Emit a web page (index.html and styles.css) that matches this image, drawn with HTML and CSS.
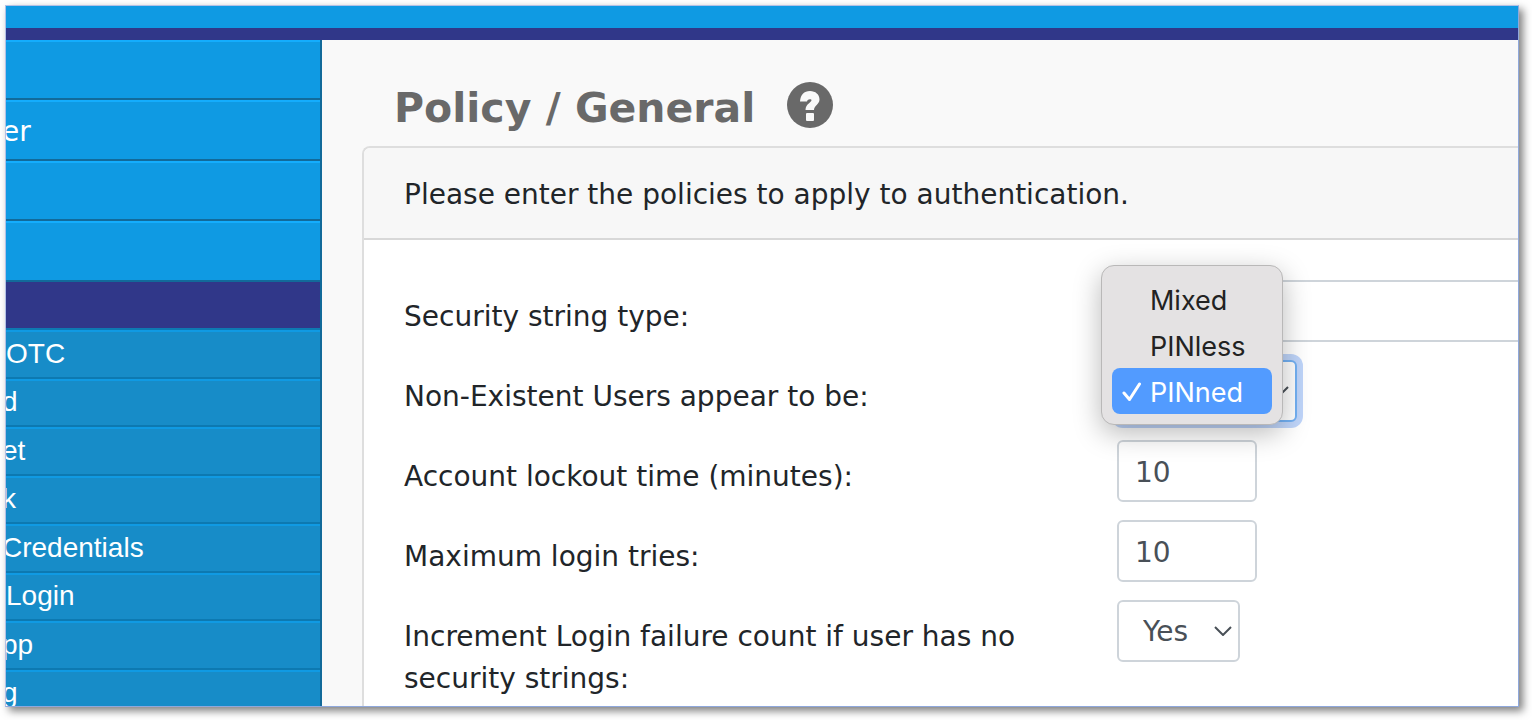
FILE: index.html
```html
<!DOCTYPE html>
<html lang="en">
<head>
<meta charset="UTF-8">
<title>Policy / General</title>
<link rel="stylesheet" href="styles.css">
</head>
<body>
<div class="frame">
  <header class="topbar"></header>
  <div class="layout">
    <nav class="sidebar">
      <ul class="menu">
        <li><a href="#"></a></li>
        <li><a href="#" class="cut">er</a></li>
        <li><a href="#"></a></li>
        <li><a href="#"></a></li>
      </ul>
      <a href="#" class="current"></a>
      <ul class="submenu">
        <li><a href="#">OTC</a></li>
        <li><a href="#" class="cut">d</a></li>
        <li><a href="#" class="cut">et</a></li>
        <li><a href="#" class="cut">k</a></li>
        <li><a href="#" class="cut">Credentials</a></li>
        <li><a href="#">Login</a></li>
        <li><a href="#" class="cut">pp</a></li>
        <li><a href="#" class="cut">g</a></li>
      </ul>
    </nav>
    <main class="content">
      <div class="title">
        <h1>Policy / General</h1>
        <button type="button" class="help" aria-label="Help">
          <svg viewBox="0 0 46 46" width="46" height="46">
            <circle cx="23" cy="23" r="23" fill="#696969"/>
            <path d="M13 19.500C13.500 13 17 9 23 9C28.500 9 32.500 12.500 32.500 17.500C32.500 22.500 27 23.500 27 28H18.500C18.500 22 24.500 20.500 24.500 18C24.500 16.800 20.500 16.500 20 19.500Z" fill="#f9f9f9"/>
            <rect x="19" y="31" width="8" height="8" rx="1" fill="#f9f9f9"/>
          </svg>
        </button>
      </div>
      <section class="card">
        <p class="card-header">Please enter the policies to apply to authentication.</p>
        <form class="card-body">
          <div class="row">
            <label for="type">Security string type:</label>
            <div class="field"><select id="type" class="wide"><option></option></select></div>
          </div>
          <div class="row">
            <label for="users">Non-Existent Users appear to be:</label>
            <div class="field">
              <select id="users" class="focused"><option>PINned</option></select>
              <div class="popup" role="listbox" aria-label="Non-Existent Users appear to be">
                <button type="button" role="option">Mixed</button>
                <button type="button" role="option">PINless</button>
                <button type="button" role="option" class="selected" aria-selected="true">
                  <svg viewBox="0 0 20 22" width="20" height="22"><path d="M2 12L7.500 18.500L17.500 3" fill="none" stroke="#fff" stroke-width="3" stroke-linecap="round" stroke-linejoin="round"/></svg>
                  PINned
                </button>
              </div>
            </div>
          </div>
          <div class="row">
            <label for="lockout">Account lockout time (minutes):</label>
            <div class="field"><input id="lockout" type="text" value="10"></div>
          </div>
          <div class="row">
            <label for="tries">Maximum login tries:</label>
            <div class="field"><input id="tries" type="text" value="10"></div>
          </div>
          <div class="row">
            <label for="increment">Increment Login failure count if user has no security strings:</label>
            <div class="field"><select id="increment" class="short"><option>Yes</option><option>No</option></select></div>
          </div>
        </form>
      </section>
    </main>
  </div>
</div>
</body>
</html>
```

FILE: styles.css
```css
* {
    box-sizing: border-box;
}
body {
    margin: 0;
    padding: 5px 13px 13px 5px;
    height: 100vh;
    background: #fff;
    color: #212529;
    font-family: "DejaVu Sans", Verdana, sans-serif;
    font-size: 28px;
    line-height: 42px;
}
.frame {
    display: flex;
    flex-direction: column;
    height: 100%;
    overflow: hidden;
    border: 1px solid #8fa8dc;
    border-top-color: #b3c1e6;
    border-left-color: #b3c1e6;
    box-shadow: 4px 4px 8px rgba(0, 0, 0, 0.5);
}
.topbar {
    flex: none;
    height: 34px;
    background: #0f9ae3;
    border-bottom: 12px solid #303789;
}
.layout {
    display: flex;
    flex: 1;
    min-height: 0;
}

/* Sidebar */
.sidebar {
    flex: none;
    width: 316px;
    overflow: hidden;
    background: #178cc8;
    border-right: 2px solid #126a9a;
}
.sidebar ul {
    margin: 0;
    padding: 0;
    list-style: none;
}
.sidebar a {
    display: flex;
    align-items: center;
    height: 100%;
    color: #fff;
    text-decoration: none;
}
.sidebar .cut {
    margin-left: -4px;
}
.menu li {
    height: 60px;
    padding-top: 2px;
    background: #0f9ae3;
    border-top: 2px solid #14adfd;
    border-bottom: 2px solid #126a9a;
}
.menu li:nth-child(even) {
    height: 61px;
}
.sidebar .current {
    height: 48px;
    background: #303789;
    border-bottom: 2px solid #0d79b1;
}
.submenu {
    font-family: "Liberation Sans", Arial, sans-serif;
}
.submenu li {
    height: 48px;
    padding-bottom: 2px;
    border-top: 2px solid #109ae3;
    border-bottom: 2px solid #0d79b1;
}
.submenu li:nth-child(odd) {
    height: 49px;
}

/* Page content */
.content {
    flex: 1;
    min-width: 0;
    padding: 40px 0 0 40px;
    background: #f9f9f9;
}
.title {
    display: flex;
    align-items: center;
    gap: 32px;
    height: 50px;
    margin: 0 0 16px 32px;
}
.title h1 {
    margin: 0;
    padding-top: 6px;
    color: #696969;
    font-size: 41px;
}
.help {
    display: flex;
    padding: 0;
    border: 0;
    background: none;
}
.card {
    min-height: 100%;
    background: #fff;
    border: 2px solid #dedede;
    border-right: 0;
    border-radius: 8px 0 0 0;
}
.card-header {
    margin: 0;
    padding: 26px 40px 22px;
    background: #f7f7f7;
    border-bottom: 2px solid #d8d8d8;
    border-radius: 6px 0 0 0;
}
.card-body {
    display: flex;
    flex-direction: column;
    gap: 18px;
    padding: 40px 0 40px 40px;
}
.row {
    display: grid;
    grid-template-columns: 64% 1fr;
}
.row label {
    padding: 16px 40px 0 0;
}
.field {
    position: relative;
}
input, select {
    display: block;
    width: 140px;
    height: 62px;
    padding: 2px 16px 0;
    background: #fff;
    border: 2px solid #ced4da;
    border-radius: 6px;
    color: #495057;
    font: inherit;
}
select {
    padding: 2px 20px 0;
    appearance: none;
    background: #fff url("data:image/svg+xml,%3Csvg xmlns='http://www.w3.org/2000/svg' width='18' height='10'%3E%3Cpath d='M1 1l8 8 8-8' fill='none' stroke='%23495057' stroke-width='2'/%3E%3C/svg%3E") no-repeat right 6px center;
}
.wide {
    width: 100%;
    background-image: none;
    border-right: 0;
    border-radius: 6px 0 0 6px;
}
.short {
    width: 123px;
    padding: 2px 24px 0;
}
.focused {
    width: 180px;
    border-color: #73b1f4;
    box-shadow: 0 0 0 6px #bfd5fa;
}

/* Open option list */
.popup {
    position: absolute;
    top: -95px;
    left: -16px;
    z-index: 1;
    width: 182px;
    padding: 10px;
    background: #e4e2e3;
    border: 1px solid #b9b8b8;
    border-radius: 13px;
    box-shadow: 0 8px 28px rgba(0, 0, 0, 0.28);
}
.popup button {
    display: flex;
    align-items: center;
    justify-content: flex-start;
    gap: 8px;
    width: 100%;
    height: 46px;
    padding: 2px 0 0 38px;
    background: none;
    border: 0;
    border-radius: 8px;
    color: #222;
    font-family: Inter, sans-serif;
    font-size: 27px;
}
.popup .selected {
    padding-left: 10px;
    background: #529bff;
    color: #fff;
}
```
